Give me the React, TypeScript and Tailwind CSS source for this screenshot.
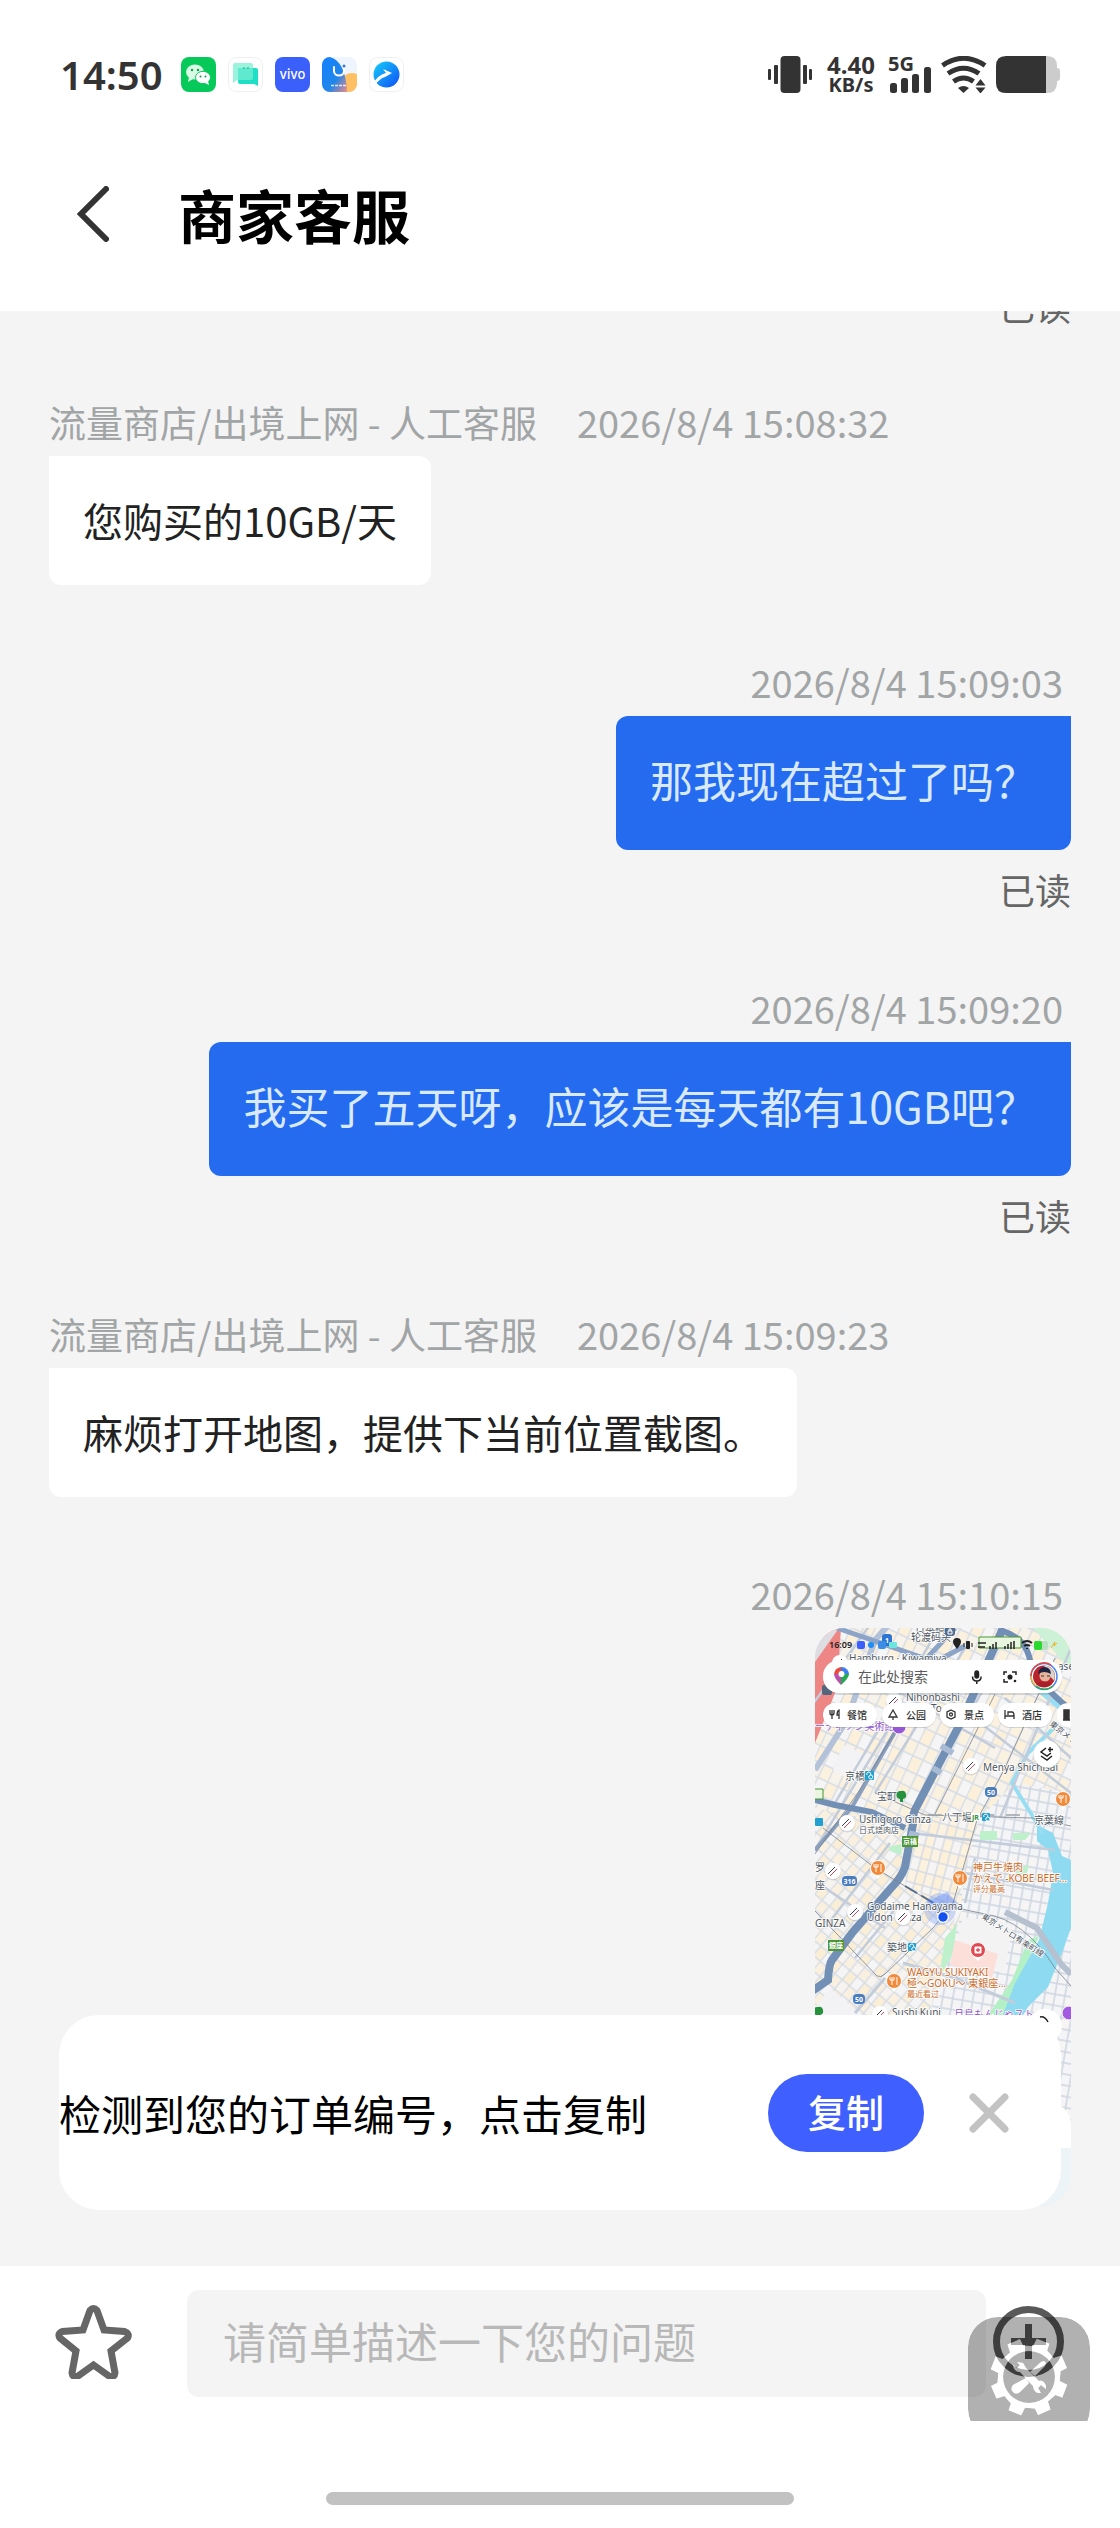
import { useState } from "react";

type Message = {
  id: number;
  from: "agent" | "me";
  time: string;
  text?: string;
  read?: boolean;
};

const AGENT_NAME = "流量商店/出境上网 - 人工客服";

const messages: Message[] = [
  { id: 1, from: "agent", time: "2026/8/4 15:08:32", text: "您购买的10GB/天" },
  { id: 2, from: "me", time: "2026/8/4 15:09:03", text: "那我现在超过了吗？", read: true },
  { id: 3, from: "me", time: "2026/8/4 15:09:20", text: "我买了五天呀，应该是每天都有10GB吧？", read: true },
  { id: 4, from: "agent", time: "2026/8/4 15:09:23", text: "麻烦打开地图，提供下当前位置截图。" },
  { id: 5, from: "me", time: "2026/8/4 15:10:15" },
];

function AppIcons() {
  return (
    <div className="flex gap-3">
      {/* WeChat */}
      <svg className="size-[35px]" viewBox="0 0 35 35">
        <rect width="35" height="35" rx="8" fill="#07c95a" />
        <ellipse cx="14" cy="15" rx="9" ry="7.500" fill="#d9fbe6" />
        <path d="M8 20l-1 5 5-3z" fill="#d9fbe6" />
        <ellipse cx="22" cy="20.500" rx="7.500" ry="6.200" fill="#fff" stroke="#07c95a" strokeWidth="1" />
        <path d="M24 26l4 2-1-4z" fill="#fff" />
        <circle cx="11" cy="13" r="1.200" fill="#07a04a" />
        <circle cx="17" cy="13" r="1.200" fill="#07a04a" />
        <circle cx="19.500" cy="19.500" r="1" fill="#07a04a" />
        <circle cx="24.500" cy="19.500" r="1" fill="#07a04a" />
      </svg>
      {/* Messages */}
      <svg className="size-[35px]" viewBox="0 0 35 35">
        <rect x=".5" y=".5" width="34" height="34" rx="8" fill="#fff" stroke="#efefef" />
        <path d="M5 8q0-2 2-2h16q2 0 2 2v13q0 2-2 2H9l-4 3z" fill="#9af3dd" />
        <path d="M10 13q0-2 2-2h16q2 0 2 2v16l-4-2H12q-2 0-2-2z" fill="#1fe0c6" />
        <path d="M10 13q0-2 2-2h13v10q0 2-2 2H10z" fill="#5feacf" />
        <path d="M16 10v2M20 10v2" stroke="#17a58f" strokeWidth="1" />
      </svg>
      {/* vivo */}
      <svg className="size-[35px]" viewBox="0 0 35 35">
        <rect width="35" height="35" rx="8" fill="#3b5ffb" />
        <text x="17.500" y="22" textAnchor="middle" fontFamily="Inter, sans-serif" fontSize="13" fontWeight="500" fill="#fff">
          vivo
        </text>
      </svg>
      {/* App store */}
      <svg className="size-[35px]" viewBox="0 0 35 35">
        <defs>
          <linearGradient id="storeBlue" x1="0" y1="0" x2="1" y2="1">
            <stop offset="0" stopColor="#1480ff" />
            <stop offset=".6" stopColor="#1f86ea" />
            <stop offset="1" stopColor="#f08a8a" />
          </linearGradient>
          <clipPath id="storeClip">
            <rect width="35" height="35" rx="8" />
          </clipPath>
        </defs>
        <g clipPath="url(#storeClip)">
          <rect width="35" height="35" fill="#eef5ff" />
          <circle cx="30" cy="27" r="11" fill="#ffc063" />
          <path d="M0 0h8c10 3 16 14 17 35H0z" fill="url(#storeBlue)" />
          <path d="M12 10v4c0 6 10 6 10 0v-4" fill="none" stroke="#fff" strokeWidth="2" strokeLinecap="round" />
          <circle cx="22" cy="9" r="1.500" fill="#3a76d8" />
          <path d="M9 28.500h16" stroke="#fff" strokeWidth="1.500" strokeDasharray="3 1" opacity=".8" />
        </g>
      </svg>
      {/* Browser */}
      <svg className="size-[35px]" viewBox="0 0 35 35">
        <defs>
          <linearGradient id="browserBlue" x1="0" y1="0" x2="1" y2="1">
            <stop offset="0" stopColor="#15d0fa" />
            <stop offset="1" stopColor="#0f4df5" />
          </linearGradient>
        </defs>
        <rect x=".5" y=".5" width="34" height="34" rx="8" fill="#fff" stroke="#efefef" />
        <circle cx="17.500" cy="17.500" r="13" fill="url(#browserBlue)" />
        <path d="M5 25c4-6 8-8 12-9l-3-4 9 4-7 4c-4 1-7 4-10 8z" fill="#fff" />
      </svg>
    </div>
  );
}

function StatusBar() {
  return (
    <div className="flex h-[37px] items-center justify-between text-[#333]">
      <div className="flex items-center gap-[26px]">
        <span className="w-[95px] font-['Noto_Sans',sans-serif] text-[40px] leading-[37px] font-semibold">14:50</span>
        <AppIcons />
      </div>

      <div className="flex items-center">
        <svg className="h-[37px] w-11" viewBox="0 0 44 37" fill="#333">
          <rect x="12.500" width="20" height="37" rx="4" />
          <rect x="6" y="9" width="4" height="19" rx="1" />
          <rect x="0" y="13" width="3" height="11" rx="1" />
          <rect x="35" y="9" width="4" height="19" rx="1" />
          <rect x="41" y="13" width="3" height="11" rx="1" />
        </svg>
        <div className="ml-[14px] flex w-[50px] flex-col items-center font-['Noto_Sans',sans-serif] font-bold">
          <span className="text-[24px] leading-5">4.40</span>
          <span className="text-[20px] leading-5">KB/s</span>
        </div>
        <div className="ml-[12px] flex h-[37px] w-11">
          <span className="w-0 font-['Noto_Sans',sans-serif] text-[20px] leading-4 font-bold">5G</span>
          <svg className="h-[37px] w-11" viewBox="0 0 44 37" fill="#333">
            <rect x="2" y="27" width="7" height="10" rx="2.500" />
            <rect x="13" y="22" width="7" height="15" rx="2.500" />
            <rect x="24" y="18" width="7" height="19" rx="2.500" />
            <rect x="36" y="11" width="7" height="26" rx="2.500" />
          </svg>
        </div>
        <svg className="ml-[9px] h-[37px] w-[46px]" viewBox="0 0 46 37" fill="none" stroke="#333" strokeWidth="5">
          <path d="M1.500 9.500Q22.500-5 44 9.500" />
          <path d="M7 17.500Q22.500 7 38 17.500" />
          <path d="M12.500 25.500Q22.500 18.500 32.500 25.500" />
          <path d="M17 32q5.500-4 11 0l-5.500 5z" fill="#333" stroke="none" />
          <path d="M34.500 29.500l5-6.500 5 6.500zM34.500 31.500l5 6 5-6z" fill="#333" stroke="none" />
        </svg>
        <svg className="ml-[9px] h-[37px] w-16" viewBox="0 0 64 37">
          <path d="M49 0h2q10 0 10 10v2q3 0 3 3v7q0 3-3 3v2q0 10-10 10h-2z" fill="#ccc" />
          <path d="M10 0h40v37H10Q0 37 0 27V10Q0 0 10 0z" fill="#333" />
        </svg>
      </div>
    </div>
  );
}

const roads =
  "M-5 80L60-10M20 175L130-10M-5 230L80 90M60 165L150 20M100 180L175 50M10 300L75 215M40 330L85 275M185 190L256 20M160 230L150 275M190 70L256 130M120 60L256 165M60 50L180 120M96 205L240 222M150 245L238 262M-5 250L70 300";
const forkPins = [
  [63, 240],
  [145, 250],
  [79, 353],
  [248, 171],
];
const chopPins = [
  [25, 35],
  [79, 73],
  [156, 138],
  [32, 195],
  [18, 243],
  [40, 284],
  [88, 289],
  [65, 386],
];
const chips = [
  { x: 8, label: "餐馆" },
  { x: 67, label: "公园" },
  { x: 125, label: "景点" },
  { x: 183, label: "酒店" },
];
const labels = [
  { x: 100, y: 4, t: "日本橋" },
  { x: 96, y: 13, t: "轮渡码头" },
  { x: 34, y: 34, t: "Hamburg · Kiwamiya" },
  { x: 91, y: 73, t: "Nihonbashi" },
  { x: 116, y: 84, t: "To" },
  { x: 30, y: 152, t: "京橋" },
  { x: 62, y: 172, t: "宝町" },
  { x: 168, y: 143, t: "Menya Shichisai" },
  { x: 243, y: 42, t: "ase" },
  { x: 44, y: 195, t: "Ushigoro Ginza" },
  { x: 127, y: 193, t: "八丁堀" },
  { x: 219, y: 196, t: "京葉線" },
  { x: 0, y: 243, t: "罗" },
  { x: 0, y: 261, t: "座" },
  { x: 52, y: 282, t: "Godaime Hanayama" },
  { x: 52, y: 293, t: "Udon Ginza" },
  { x: 0, y: 299, t: "GINZA" },
  { x: 72, y: 323, t: "築地" },
  { x: 77, y: 388, t: "Sushi Kuni" },
];

// Screenshot of the map app that was sent in the chat
function MapPicture() {
  return (
    <svg
      className="h-[578px] w-64 rounded-[30px]"
      viewBox="0 0 256 578"
      fontFamily="'Noto Sans', 'Noto Sans CJK SC', sans-serif"
      role="img"
    >
      <defs>
        <pattern id="blocksTop" width="22" height="30" patternUnits="userSpaceOnUse" patternTransform="rotate(25)">
          <rect width="22" height="30" fill="#d5dce6" />
          <rect x=".6" y=".6" width="9.400" height="13" fill="#fbf1df" />
          <rect x="11.200" y=".6" width="10" height="13" fill="#f7f2ea" />
          <rect x=".6" y="15" width="9.400" height="14" fill="#f6f5f5" />
          <rect x="11.200" y="15" width="10" height="14" fill="#fcf0da" />
        </pattern>
        <pattern id="blocksLow" width="19" height="24" patternUnits="userSpaceOnUse" patternTransform="rotate(40)">
          <rect width="19" height="24" fill="#d5dce6" />
          <rect x=".6" y=".6" width="8.200" height="10.600" fill="#fbeed6" />
          <rect x="10" y=".6" width="8.200" height="10.600" fill="#f5f5f6" />
          <rect x=".6" y="12.600" width="8.200" height="10.600" fill="#f7f4ef" />
          <rect x="10" y="12.600" width="8.200" height="10.600" fill="#f9f0e0" />
        </pattern>
        <pattern id="blocksMid" width="18" height="26" patternUnits="userSpaceOnUse" patternTransform="rotate(15)">
          <rect width="18" height="26" fill="#d3dae5" />
          <rect x=".6" y=".6" width="7.600" height="11.600" fill="#fdf0d8" />
          <rect x="9.600" y=".6" width="7.600" height="11.600" fill="#fbf2e2" />
          <rect x=".6" y="13.600" width="7.600" height="11.600" fill="#fdf2dd" />
          <rect x="9.600" y="13.600" width="7.600" height="11.600" fill="#f6f5f4" />
        </pattern>
        <pattern id="blocksEast" width="20" height="22" patternUnits="userSpaceOnUse" patternTransform="rotate(10)">
          <rect width="20" height="22" fill="#d0d7e2" />
          <rect x=".8" y=".8" width="8.400" height="9.400" fill="#f5f5f7" />
          <rect x="10.800" y=".8" width="8.400" height="9.400" fill="#f3f4f6" />
          <rect x=".8" y="11.800" width="8.400" height="9.400" fill="#f5f5f7" />
          <rect x="10.800" y="11.800" width="8.400" height="9.400" fill="#f6f5f4" />
        </pattern>
      </defs>

      <rect width="256" height="578" fill="url(#blocksTop)" />
      <path d="M0 180L95 200 90 260 140 290 110 400H0z" fill="url(#blocksLow)" />
      <path d="M98 190H162L150 240 138 275 90 258z" fill="url(#blocksMid)" />
      <path d="M165 190L200 155 256 165V578H110V400L145 290 150 240z" fill="url(#blocksEast)" />
      <path d="M28 117L54 128 40 155 18 142zM0 380L15 360 45 385 40 400H0z" fill="#f3f3f5" />

      {/* station and green areas */}
      <path d="M0 30L12 0H26L22 60 0 115z" fill="#ee8686" />
      <path d="M0 0H24L0 34z" fill="#dedee2" />
      <path d="M218 0L256 42V0z" fill="#cdf1d6" />
      <path d="M165 203h17v9h-17zM198 205h18l-6 7h-12zM74 219l12-3 1 11-12-4zM200 240l14-3-2 8-10 2zM130 310l12-14-4 30-14 24z" fill="#bdf0cb" />
      <path d="M148 289l50 7-9 50-50-20z" fill="#f3f3f4" />
      <path d="M140 312l43 14-6 24-42-13z" fill="#fddfda" />
      <path d="M213 312L224 308 204 352 187 392 170 392 197 352z" fill="#b4f0c6" />

      {/* river */}
      <path d="M222 197L238 205 247 228 256 232V300L247 325 233 359 213 379 200 400H183L200 355 224 312 233 275 238 245 233 222 222 213z" fill="#8ddaf1" />
      <path d="M240 99L213 125 197 155 205 168 220 192 228 206" fill="none" stroke="#98def2" strokeWidth="4" />
      <path d="M222 60L256 88" stroke="#98def2" strokeWidth="6" />

      {/* streets and expressways */}
      <path d={roads} fill="none" stroke="#c3ccda" strokeWidth="2.500" />
      <path d="M0 142L32 92 60 12 75-5" fill="none" stroke="#b3c2d8" strokeWidth="6" />
      <path d="M22 0L120 34 150 18M112 30L140 0" fill="none" stroke="#8ba4c7" strokeWidth="5" />
      <path d="M80 104L37 179 0 222" fill="none" stroke="#8ba0be" strokeWidth="4" />
      <path d="M0 172L20 177 57 184 90 200" fill="none" stroke="#7290b6" strokeWidth="6" />
      <path d="M188 0L147 92 102 178Q97 186 98 196L90 239Q86 250 77 259L37 305 17 332Q14 336 13 352L-4 364" fill="none" stroke="#7290b6" strokeWidth="8" />
      <path d="M184 2Q208 8 214 28 218 52 256 82" fill="none" stroke="#7290b6" strokeWidth="6" />
      <path d="M126 118L138 125M118 140L126 145M94 205L104 208" stroke="#a9bbd4" strokeWidth="6" />
      <path
        d="M80 104L44 163 0 226M0 283L62 348Q66 350 70 346L118 300 138 275 162 192 190 140 240 30M8 200L60 240 118 275 170 286Q210 292 240 340L256 358M60 165L110 187 217 190 256 198M120 186L180 66"
        fill="none"
        stroke="#7b828b"
        strokeWidth=".8"
      />
      <path d="M90 258L122 277" stroke="#58708c" strokeWidth="2" strokeDasharray="14 5" />
      <path d="M113 187H217" stroke="#9fa4aa" strokeWidth="1.500" strokeDasharray="14 12" />
      <path d="M190 284L222 300 246 336 256 346" fill="none" stroke="#b7c0cf" strokeWidth="6" />
      <path d="M70 350L40 385M88 335L140 350 200 375" fill="none" stroke="#c3ccd9" strokeWidth="3" />

      <circle cx="125" cy="281" r="16" fill="#4d7df5" opacity=".25" />
      <path d="M128 289L112 274 132 264 144 276z" fill="#4d7df5" opacity=".35" />

      {/* place names */}
      <g fontSize="10" fill="#4d5661" stroke="#fff" strokeWidth="1.500" paintOrder="stroke">
        {labels.map((l) => (
          <text key={l.t} x={l.x} y={l.y}>
            {l.t}
          </text>
        ))}
        <text x="44" y="205" fontSize="8">日式烧肉店</text>
        <text x="166" y="290" fontSize="8" transform="rotate(33 166 290)">
          東京メトロ有楽町線
        </text>
        <text x="234" y="97" fontSize="8" transform="rotate(38 234 97)">
          東京メト
        </text>
        <g fill="#cb6a26">
          <text x="158" y="243">神戸牛焼肉</text>
          <text x="158" y="254">かえで -KOBE BEEF…</text>
          <text x="158" y="264" fontSize="8">评分最高</text>
          <text x="92" y="348">WAGYU SUKIYAKI</text>
          <text x="92" y="359">極～GOKU～ 東銀座…</text>
          <text x="92" y="369" fontSize="8">最近看过</text>
        </g>
        <g fill="#8c55cc">
          <text x="0" y="102">ーティゾン美術館</text>
          <text x="139" y="390">月島もんじゃスト</text>
        </g>
      </g>

      {/* road shields and stations */}
      <g fontSize="7" fontWeight="700" fill="#fff" textAnchor="middle">
        <rect x="170" y="159" width="12" height="10" rx="4" fill="#4a7cc0" />
        <text x="176" y="166.500">50</text>
        <rect x="27" y="248" width="15" height="10" rx="4" fill="#4a7cc0" />
        <text x="34.500" y="255.500">316</text>
        <rect x="38" y="366" width="12" height="10" rx="4" fill="#4a7cc0" />
        <text x="44" y="373.500">50</text>
        <rect x="67" y="6" width="10" height="12" rx="3" fill="#2d75d2" />
        <text x="72" y="14.500">1</text>
        <rect x="87" y="208" width="16" height="11" fill="#4c9635" />
        <text x="95" y="216">京橋</text>
        <rect x="13" y="312" width="16" height="11" fill="#4c9635" />
        <text x="21" y="320">銀座</text>
        <rect x="156" y="185" width="9" height="8" fill="#fff" />
        <text x="160.500" y="192" fill="#2f8f45">JR</text>
      </g>
      <g fill="#24a0ce">
        <rect x="50" y="143" width="9" height="9" rx="1" />
        <rect x="167" y="185" width="8" height="8" rx="1" />
        <rect x="0" y="190" width="8" height="8" rx="1" />
        <rect x="93" y="315" width="8" height="8" rx="1" />
      </g>
      <path d="M52 147a2 2 0 1 1 2 1 2 2 0 1 0 2-1M169 189a2 2 0 1 1 2 1 2 2 0 1 0 2-1M95 319a2 2 0 1 1 2 1 2 2 0 1 0 2-1" fill="none" stroke="#fff" />
      <path d="M86 163a4 4 0 0 1 2 8v3h-3v-3a4 4 0 0 1 1-8zM3 379a4 4 0 0 1 2 8h-3a4 4 0 0 1 1-8z" fill="#25913c" />
      <path d="M164 9h42v11h-42zM0 161h8v10H0" fill="#e9f6e0" stroke="#4c9635" />
      <rect x="130" y="-2" width="10" height="10" rx="3" fill="#546d8e" />
      <path d="M133 3h4v3h-4zM134 3V1h2v2" fill="none" stroke="#fff" />
      <rect x="7" y="57" width="10" height="10" rx="2" fill="#54657c" />
      <circle cx="84" cy="99" r="7" fill="#9557d8" stroke="#fff" />
      <circle cx="254" cy="385" r="7" fill="#a25be0" stroke="#fff" />

      {forkPins.map(([x, y]) => (
        <g key={x}>
          <path d={`M${x - 4} ${y + 6}l4 5 4-5z`} fill="#fff" />
          <circle cx={x} cy={y} r="7.500" fill="#f18a3b" stroke="#fff" />
          <path d={`M${x - 2} ${y - 4}v8M${x - 4} ${y - 4}v3h4v-3M${x + 3} ${y - 4}v8`} fill="none" stroke="#fff" />
        </g>
      ))}
      {chopPins.map(([x, y]) => (
        <g key={x + y}>
          <circle cx={x} cy={y + 1} r="8.500" fill="#8a93a0" opacity=".3" />
          <circle cx={x} cy={y} r="8" fill="#fff" />
          <path d={`M${x - 5} ${y + 3}l7-7`} stroke="#39415b" />
          <path d={`M${x - 3} ${y + 5}l7-7`} stroke="#e0455c" />
        </g>
      ))}
      <path d="M158 328l5 5 5-5z" fill="#fff" />
      <circle cx="163" cy="322" r="7.500" fill="#e2484f" stroke="#fff" />
      <rect x="159.500" y="318.500" width="7" height="7" rx="1" fill="#fff" />
      <path d="M163 320v4M161 322h4" stroke="#e2484f" strokeWidth="1.300" />
      <circle cx="128" cy="289" r="6" fill="#fff" />
      <circle cx="128" cy="289" r="4.700" fill="#1352f0" />

      {/* small status bar */}
      <text x="14" y="20" fontSize="9" fontWeight="600" fill="#222">16:09</text>
      <rect x="42" y="13" width="8" height="8" rx="2" fill="#3b5ffb" />
      <circle cx="56" cy="17" r="3" fill="#1b8df5" />
      <rect x="63" y="13" width="8" height="8" rx="2" fill="#3b8de8" />
      <rect x="74" y="14" width="8" height="6" rx="1" fill="#6de6df" />
      <path d="M142 21q-4-5-4-7a4 4 0 0 1 8 0q0 2-4 7z" fill="#222" />
      <rect x="151" y="13" width="4" height="8" rx="1" fill="#222" />
      <path d="M149 15v4M157 15v4" stroke="#222" />
      <path d="M163 15h8M163 19h7M175 21v-3M178 21v-5M181 21v-7M190 21v-3M193 21v-5M196 21v-7M199 21v-8" stroke="#222" strokeWidth="1.500" />
      <path d="M207 15q5-4 10 0M209 18q3-2 6 0M212 21v-1" fill="none" stroke="#222" strokeWidth="2" />
      <rect x="219" y="13" width="14" height="9" rx="2" fill="#b9dfc0" />
      <rect x="219" y="13" width="8" height="9" rx="2" fill="#2bd92f" />
      <path d="M236 20l4-6-1 4 3-3" stroke="#efb323" fill="none" />

      {/* search field */}
      <rect x="8" y="34" width="239" height="33" rx="16" fill="#707a88" opacity=".25" />
      <rect x="8" y="32" width="239" height="33" rx="16" fill="#fff" />
      <path d="M19 46a7.500 7.500 0 0 1 7-7v7z" fill="#ea4a3c" />
      <path d="M26 39a7.500 7.500 0 0 1 8 8h-8z" fill="#3c7ef0" />
      <path d="M19 46h7v11q-7-7-7-11z" fill="#bd50ae" />
      <path d="M34 46q0 4-8 11V46z" fill="#27a954" />
      <circle cx="26.500" cy="46" r="3" fill="#fff" />
      <text x="43" y="53.500" fontSize="14" fill="#5c5c5c">在此处搜索</text>
      <g fill="none" stroke="#222" strokeWidth="1.500">
        <rect x="160" y="43" width="3.500" height="7" rx="2" fill="#222" />
        <path d="M157.500 48.500q0 4.500 4.300 4.500t4.300-4.500M161.800 53v3" />
        <path d="M189 47v-3h3M197 44h4v3M189 51v3h4" />
        <circle cx="195" cy="49" r="1.800" fill="#222" />
        <circle cx="200" cy="53" r=".6" fill="#222" />
      </g>
      <circle cx="229" cy="48.500" r="13" fill="#fff" stroke="#4285f4" strokeWidth="1.500" />
      <path d="M216 48a13 13 0 0 1 20-11" fill="none" stroke="#e7483d" strokeWidth="1.500" />
      <path d="M216 48a13 13 0 0 0 5 10" fill="none" stroke="#f2b72d" strokeWidth="1.500" />
      <path d="M221 58a13 13 0 0 0 17 0" fill="none" stroke="#32a852" strokeWidth="1.500" />
      <circle cx="229" cy="48.500" r="11" fill="#b8242d" />
      <path d="M229 37.500a11 11 0 0 1 10 15l-6-6z" fill="#d8d3cf" />
      <circle cx="230" cy="48" r="5.500" fill="#e6b49a" />
      <path d="M223 46q1-7 7-7 6 1 6 7-7-4-13 0z" fill="#1f2440" />
      <path d="M221 56q8-5 16 0-8 6-16 0z" fill="#a81e29" />
      <path d="M226 48h3M232 48h3" stroke="#333" />

      {/* category chips */}
      {chips.map((c) => (
        <g key={c.label}>
          <rect x={c.x} y="76" width="54" height="24" rx="12" fill="#707a88" opacity=".25" />
          <rect x={c.x} y="75" width="54" height="24" rx="12" fill="#fff" />
          <text x={c.x + 24} y="90.500" fontSize="10" fontWeight="500" fill="#333">
            {c.label}
          </text>
        </g>
      ))}
      <path d="M256 75h-2q-12 0-12 12t12 12h2z" fill="#fff" />
      <path d="M249 82h5v9h-5zM248 92h7" fill="#333" stroke="#333" strokeWidth="1.500" />
      <g fill="none" stroke="#333" strokeWidth="1.300">
        <path d="M15 82v3q0 2 2 2t2-2v-3M17 82v9M24 91v-9q-2 1-2 5h2" />
        <path d="M78 82l-4 7h8zM78 89v3" />
        <path d="M136 82l4 2v5l-4 2-4-2v-5z" />
        <circle cx="136" cy="86.500" r="1.500" />
        <path d="M190 82v9M190 88h9v3M193 87v-3h4q2 0 2 4" />
      </g>

      {/* layers button */}
      <circle cx="232" cy="127" r="14" fill="#707a88" opacity=".2" />
      <circle cx="232" cy="126" r="13.500" fill="#fff" />
      <path d="M231 120l-5 4 6 4 4-3M226 128l6 4 5-4M235 119v5M233 121.500h5" fill="none" stroke="#222" strokeWidth="1.500" />

      {/* bottom sheet and compass */}
      <circle cx="230" cy="398" r="17" fill="#fff" />
      <path d="M225 389q5-1 8 5" fill="none" stroke="#222" strokeWidth="1.500" />
      <path d="M0 520V500Q0 475 24 475H232Q256 475 256 500V520z" fill="#fff" />
      <rect y="520" width="256" height="58" fill="#edf4f8" />
    </svg>
  );
}

function ChatMessage({ message }: { message: Message }) {
  const isMe = message.from === "me";

  return (
    <li className={isMe ? "flex flex-col items-end" : "flex flex-col items-start"}>
      <div className={isMe ? "mb-[17px] pr-2 leading-[34px] text-[#a2a5a6]" : "mb-[17px] flex gap-10 leading-[34px] text-[#a2a5a6]"}>
        {!isMe && <span className="text-[37px]">{AGENT_NAME}</span>}
        <time className="block text-[38px]">{message.time}</time>
      </div>

      {message.text ? (
        <p
          className={
            isMe
              ? "rounded-xl rounded-tr-none bg-[#246bf0] px-[34px] pt-8 pb-10 text-[43px] leading-[62px] text-[#d9e9ff]"
              : "rounded-xl rounded-tl-none bg-white px-[34px] py-9 text-[40px] leading-[57px] text-[#222]"
          }
        >
          {message.text}
        </p>
      ) : (
        <MapPicture />
      )}

      {message.read && <span className="mt-5 mb-[3px] leading-[38px] text-[#666]">已读</span>}
    </li>
  );
}

// Outline of a gear with eight teeth, centred on cx, cy
function gearPath(cx: number, cy: number) {
  const points: string[] = [];
  for (let i = 0; i < 8; i++) {
    const middle = 22.5 + i * 45;
    const corners = [
      [-15, 31],
      [-11, 39],
      [9, 39],
      [12, 32],
    ];
    for (const [offset, radius] of corners) {
      const angle = ((middle + offset) * Math.PI) / 180;
      points.push(`${(cx + radius * Math.cos(angle)).toFixed(1)} ${(cy + radius * Math.sin(angle)).toFixed(1)}`);
    }
  }
  return `M${points.join("L")}Z`;
}

function ToolsGlyph({ fill, hole }: { fill: string; hole: string }) {
  return (
    <>
      <path d={gearPath(61, 60)} fill={fill} />
      <circle cx="61" cy="60" r="26" fill={hole} />
      <g fill={fill}>
        <path d="M73 45l3-1 2 2-1 3-10 10-5-4z" />
        <path d="M58 61l3 5-9 9q-4 3-7 0t0-7z" />
        <path d="M49 45l6 1 3 5 13 13q5-1 7 5l0 3-5-4-3 3 3 5q-7 1-8-7L52 55q-6 0-7-7l4 3 3-3z" />
      </g>
    </>
  );
}

function FloatingTools() {
  return (
    <button type="button" aria-label="工具" className="absolute top-[51px] right-[30px]">
      <svg className="h-[104px] w-[122px]" viewBox="0 0 122 104">
        <defs>
          <mask id="toolsMask">
            <rect width="122" height="122" rx="30" fill="#fff" />
            <ToolsGlyph fill="#000" hole="#fff" />
          </mask>
          <mask id="glyphMask">
            <ToolsGlyph fill="#fff" hole="#000" />
          </mask>
        </defs>
        <rect width="122" height="122" rx="30" fill="#000" opacity=".3" mask="url(#toolsMask)" />
        <rect width="122" height="122" fill="#fff" opacity=".5" mask="url(#glyphMask)" />
      </svg>
    </button>
  );
}

export default function App() {
  const [showToast, setShowToast] = useState(true);
  const [draft, setDraft] = useState("");

  return (
    <div className="flex min-h-screen flex-col bg-white font-['Noto_Sans_CJK_SC',sans-serif] text-[36px]">
      <header className="px-[60px] pt-14 pb-[62px]">
        <StatusBar />
        <div className="mt-[86px] flex h-[70px] items-center">
          <button type="button" aria-label="返回" className="ml-[17px]">
            <svg className="h-14 w-8" viewBox="0 0 32 56" fill="none" stroke="#333" strokeWidth="6">
              <path d="M29 3L4 28l25 25" strokeLinecap="round" />
            </svg>
          </button>
          <h1 className="ml-[69px] text-[58px] leading-[70px] font-bold text-black">商家客服</h1>
        </div>
      </header>

      <main className="relative flex-1 overflow-hidden bg-[#f4f4f4] px-[49px] pb-[60px]">
        <p className="-mt-6 mb-[82px] text-right leading-9 text-[#666]">已读</p>
        <ul className="flex flex-col gap-20">
          {messages.map((message) => (
            <ChatMessage key={message.id} message={message} />
          ))}
        </ul>

        {showToast && (
          <div className="absolute inset-x-[59px] bottom-14 flex h-[195px] items-center rounded-[40px] bg-white">
            <p className="flex-1 text-[42px] leading-[60px] text-black">检测到您的订单编号，点击复制</p>
            <button type="button" className="h-[78px] w-[156px] rounded-full bg-[#3f5fff] pb-1 text-[38px] leading-[74px] font-medium text-white">
              复制
            </button>
            <button type="button" aria-label="关闭" className="mr-[52px] ml-[45px]" onClick={() => setShowToast(false)}>
              <svg className="size-10" viewBox="0 0 40 40" stroke="#c3c3c3" strokeWidth="7" strokeLinecap="round">
                <path d="M4 4l32 32M36 4L4 36" />
              </svg>
            </button>
          </div>
        )}
      </main>

      <footer className="relative flex flex-col items-center pt-6 pb-[23px]">
        <div className="flex w-full items-center pr-14 pl-[55px]">
          <button type="button" aria-label="收藏" className="mb-1">
            <svg className="h-[74px] w-[77px]" viewBox="0 0 77 74" fill="none" stroke="#666" strokeWidth="7">
              <path d="M35 5.500q3.500-4 7 0l7 19.500 20.500 1.500q5.500 2 3 6.500L56 46l4 22q-.5 5-6 3L38.500 60 23 71q-5.500 2-6-3l4-22L5 33q-3-4.500 2.500-6.500L28 25z" />
            </svg>
          </button>
          <input
            type="text"
            aria-label="消息"
            value={draft}
            onChange={(e) => setDraft(e.target.value)}
            placeholder="请简单描述一下您的问题"
            className="ml-[55px] h-[107px] min-w-0 flex-1 rounded-xl bg-[#f4f4f4] px-9 pb-2 text-[43px] text-[#222] outline-none placeholder:text-[#b8b8b8]"
          />
          <button type="button" aria-label="更多" className="mb-1 ml-[7px]">
            <svg className="size-[71px]" viewBox="0 0 71 71" fill="none" stroke="#595959" strokeWidth="7">
              <circle cx="35.500" cy="35.500" r="32" />
              <path d="M35.500 18v35M18 35.500h35" />
            </svg>
          </button>
        </div>
        <FloatingTools />
        <div className="mt-[95px] h-[13px] w-[468px] rounded-full bg-[#c2c2c2]" />
      </footer>
    </div>
  );
}
